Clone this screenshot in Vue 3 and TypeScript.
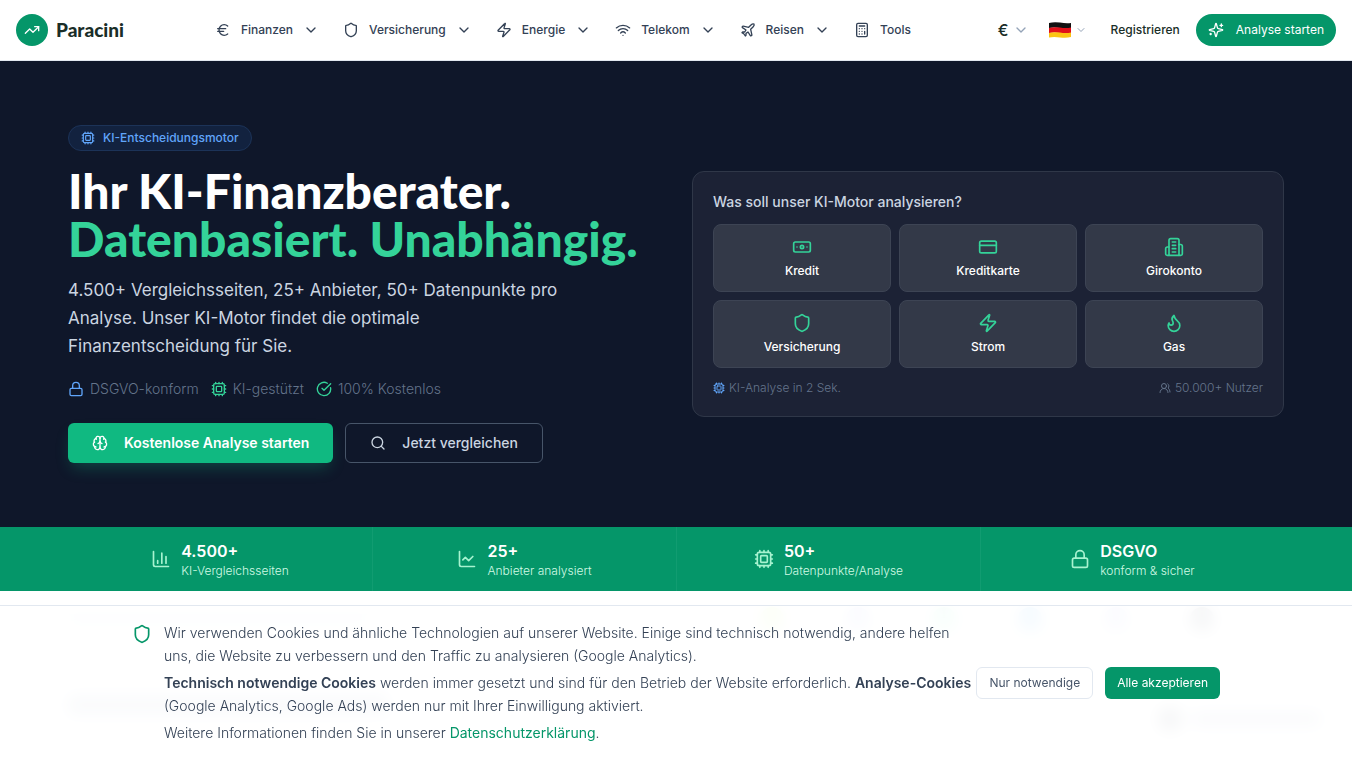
<script setup lang="ts">
import { h } from 'vue'

const shapes: Record<string, string> = {
  trend: '<path d="M22 7 13.5 15.5 8.5 10.5 2 17"/><path d="M16 7h6v6"/>',
  euro: '<path d="M4 10h12"/><path d="M4 14h9"/><path d="M19 6a7.7 7.7 0 0 0-5.2-2A7.9 7.9 0 0 0 6 12c0 4.4 3.5 8 7.8 8 2 0 3.8-.8 5.2-2"/>',
  shield: '<path d="M20 13c0 5-3.5 7.5-7.66 8.95a1 1 0 0 1-.67-.01C7.5 20.5 4 18 4 13V6a1 1 0 0 1 1-1c2 0 4.5-1.2 6.24-2.72a1.17 1.17 0 0 1 1.52 0C14.51 3.81 17 5 19 5a1 1 0 0 1 1 1z"/>',
  zap: '<path d="M4 14a1 1 0 0 1-.78-1.63l9.9-10.2a.5.5 0 0 1 .86.46l-1.92 6.02A1 1 0 0 0 13 10h7a1 1 0 0 1 .78 1.63l-9.9 10.2a.5.5 0 0 1-.86-.46l1.92-6.02A1 1 0 0 0 11 14z"/>',
  wifi: '<path d="M12 20h.01"/><path d="M2 8.82a15 15 0 0 1 20 0"/><path d="M5 12.859a10 10 0 0 1 14 0"/><path d="M8.5 16.429a5 5 0 0 1 7 0"/>',
  plane: '<path d="M17.8 19.2 16 11l3.5-3.5C21 6 21.5 4 21 3c-1-.5-3 0-4.5 1.5L13 8 4.8 6.2c-.5-.1-.9.1-1.1.5l-.3.5c-.2.5-.1 1 .3 1.3L9 12l-2 3H4l-1 1 3 2 2 3 1-1v-3l3-2 3.5 5.3c.3.4.8.5 1.3.3l.5-.2c.4-.3.6-.7.5-1.2z"/>',
  calculator: '<rect width="16" height="20" x="4" y="2" rx="2"/><path d="M8 6h8M16 14v4M16 10h.01M12 10h.01M8 10h.01M12 14h.01M8 14h.01M12 18h.01M8 18h.01"/>',
  sparkles: '<path d="M9.937 15.5A2 2 0 0 0 8.5 14.063l-6.135-1.582a.5.5 0 0 1 0-.962L8.5 9.936A2 2 0 0 0 9.937 8.5l1.582-6.135a.5.5 0 0 1 .963 0L14.063 8.5A2 2 0 0 0 15.5 9.937l6.135 1.581a.5.5 0 0 1 0 .964L15.5 14.063a2 2 0 0 0-1.437 1.437l-1.582 6.135a.5.5 0 0 1-.963 0z"/><path d="M20 3v4M22 5h-4M4 17v2M5 18H3"/>',
  cpu: '<rect width="16" height="16" x="4" y="4" rx="2"/><rect width="8" height="8" x="8" y="8" rx="1"/><path d="M12 20v2M12 2v2M17 20v2M17 2v2M2 12h2M2 17h2M2 7h2M20 12h2M20 17h2M20 7h2M7 20v2M7 2v2"/>',
  lock: '<rect width="18" height="11" x="3" y="11" rx="2"/><path d="M7 11V7a5 5 0 0 1 10 0v4"/>',
  check: '<path d="M21.801 10A10 10 0 1 1 17 3.335"/><path d="m9 11 3 3L22 4"/>',
  brain: '<path d="M12 18V5"/><path d="M15 13a4.17 4.17 0 0 1-3-4 4.17 4.17 0 0 1-3 4"/><path d="M17.598 6.5A3 3 0 1 0 12 5a3 3 0 1 0-5.598 1.5"/><path d="M17.997 5.125a4 4 0 0 1 2.526 5.77"/><path d="M18 18a4 4 0 0 0 2-7.464"/><path d="M19.967 17.483A4 4 0 1 1 12 18a4 4 0 1 1-7.967-.517"/><path d="M6 18a4 4 0 0 1-2-7.464"/><path d="M6.003 5.125a4 4 0 0 0-2.526 5.77"/>',
  search: '<circle cx="11" cy="11" r="8"/><path d="m21 21-4.3-4.3"/>',
  banknote: '<rect width="20" height="12" x="2" y="6" rx="2"/><circle cx="12" cy="12" r="2"/><path d="M6 12h.01M18 12h.01"/>',
  card: '<rect width="20" height="14" x="2" y="5" rx="2"/><path d="M2 10h20"/>',
  building: '<path d="M6 22V4a2 2 0 0 1 2-2h8a2 2 0 0 1 2 2v18Z"/><path d="M6 12H4a2 2 0 0 0-2 2v6a2 2 0 0 0 2 2h2"/><path d="M18 9h2a2 2 0 0 1 2 2v9a2 2 0 0 1-2 2h-2"/><path d="M10 6h4M10 10h4M10 14h4M10 18h4"/>',
  flame: '<path d="M8.5 14.5A2.5 2.5 0 0 0 11 12c0-1.38-.5-2-1-3-1.072-2.143-.224-4.054 2-6 .5 2.5 2 4.9 4 6.5 2 1.6 3 3.5 3 5.5a7 7 0 1 1-14 0c0-1.153.433-2.294 1-3a2.5 2.5 0 0 0 2.5 2.5z"/>',
  users: '<path d="M18 21a8 8 0 0 0-16 0"/><circle cx="10" cy="8" r="5"/><path d="M22 20c0-3.37-2-6.5-4-8a5 5 0 0 0-.45-8.3"/>',
  bars: '<path d="M3 3v16a2 2 0 0 0 2 2h16"/><path d="M18 17V9M13 17V5M8 17v-3"/>',
  line: '<path d="M3 3v16a2 2 0 0 0 2 2h16"/><path d="m19 9-5 5-4-4-3 3"/>',
  chevron: '<path d="m6 9 6 6 6-6"/>',
}

const Icon = (props: { name: string; size: number }) =>
  h('svg', {
    width: props.size,
    height: props.size,
    viewBox: '0 0 24 24',
    fill: 'none',
    stroke: 'currentColor',
    'stroke-width': 2,
    'stroke-linecap': 'round',
    'stroke-linejoin': 'round',
    'aria-hidden': 'true',
    innerHTML: shapes[props.name],
  })

const menus = [
  { icon: 'euro', label: 'Finanzen' },
  { icon: 'shield', label: 'Versicherung' },
  { icon: 'zap', label: 'Energie' },
  { icon: 'wifi', label: 'Telekom' },
  { icon: 'plane', label: 'Reisen' },
]

const topics = [
  { icon: 'banknote', label: 'Kredit' },
  { icon: 'card', label: 'Kreditkarte' },
  { icon: 'building', label: 'Girokonto' },
  { icon: 'shield', label: 'Versicherung' },
  { icon: 'zap', label: 'Strom' },
  { icon: 'flame', label: 'Gas' },
]

const stats = [
  { icon: 'bars', value: '4.500+', label: 'KI-Vergleichsseiten' },
  { icon: 'line', value: '25+', label: 'Anbieter analysiert' },
  { icon: 'cpu', value: '50+', label: 'Datenpunkte/Analyse' },
  { icon: 'lock', value: 'DSGVO', label: 'konform & sicher' },
]
</script>

<template>
  <div class="page">
    <header class="topbar">
      <a class="brand" href="#">
        <span class="brand-mark"><Icon name="trend" :size="16" /></span>
        <span class="brand-name">Paracini</span>
      </a>
      <nav class="nav" aria-label="Hauptnavigation">
        <button v-for="m in menus" :key="m.label" type="button" class="nav-item">
          <Icon :name="m.icon" :size="16" />
          <span>{{ m.label }}</span>
          <Icon name="chevron" :size="16" />
        </button>
        <a class="nav-item" href="#"><Icon name="calculator" :size="16" /><span>Tools</span></a>
      </nav>
      <div class="actions">
        <button type="button" class="picker currency" aria-label="Währung">
          <span>€</span><Icon name="chevron" :size="16" />
        </button>
        <button type="button" class="picker language" aria-label="Sprache">
          <svg class="flag" width="22" height="18" viewBox="0 0 22 18" aria-hidden="true">
            <path fill="#111" d="M0 2Q5 .6 11 1.600T22 2V7Q17 8 11 7T0 7Z" />
            <path fill="#e0101a" d="M0 7Q5 5.600 11 6.600T22 6.600V12Q17 13 11 12T0 12Z" />
            <path fill="#fbc414" d="M0 12Q5 10.600 11 11.600T22 11.600V16Q17 17.400 11 16.400T0 16.400Z" />
          </svg>
          <Icon name="chevron" :size="12" />
        </button>
        <a class="register" href="#">Registrieren</a>
        <a class="start" href="#"><Icon name="sparkles" :size="16" />Analyse starten</a>
      </div>
    </header>

    <main>
      <section class="hero">
        <div class="container hero-grid">
          <div class="intro">
            <span class="badge"><Icon name="cpu" :size="14" />KI-Entscheidungsmotor</span>
            <h1>Ihr KI-Finanzberater.<br /><span class="accent">Datenbasiert. Unabhängig.</span></h1>
            <p class="lead">
              4.500+ Vergleichsseiten, 25+ Anbieter, 50+ Datenpunkte pro<br />
              Analyse. Unser KI-Motor findet die optimale<br />
              Finanzentscheidung für Sie.
            </p>
            <ul class="trust">
              <li><Icon class="blue" name="lock" :size="16" />DSGVO-konform</li>
              <li><Icon class="green" name="cpu" :size="16" />KI-gestützt</li>
              <li><Icon class="green" name="check" :size="16" />100% Kostenlos</li>
            </ul>
            <div class="cta">
              <a class="btn primary" href="#"><Icon name="brain" :size="16" />Kostenlose Analyse starten</a>
              <a class="btn outline" href="#"><Icon name="search" :size="16" />Jetzt vergleichen</a>
            </div>
          </div>

          <div class="panel">
            <h2>Was soll unser KI-Motor analysieren?</h2>
            <div class="topics">
              <a v-for="t in topics" :key="t.label" class="topic" href="#">
                <Icon :name="t.icon" :size="20" /><span>{{ t.label }}</span>
              </a>
            </div>
            <div class="panel-foot">
              <span><Icon class="blue" name="cpu" :size="12" />KI-Analyse in 2 Sek.</span>
              <span><Icon name="users" :size="12" />50.000+ Nutzer</span>
            </div>
          </div>
        </div>
      </section>

      <section class="stats">
        <div class="container stats-grid">
          <div v-for="s in stats" :key="s.value" class="stat">
            <Icon :name="s.icon" :size="20" />
            <div>
              <strong>{{ s.value }}</strong>
              <span>{{ s.label }}</span>
            </div>
          </div>
        </div>
      </section>

      <section class="below" aria-hidden="true">
        <div class="container partners">
          <i class="bar wide"></i>
          <div class="dots">
            <i class="dot lime"></i><i class="dot violet"></i><i class="dot teal"></i>
            <i class="dot sky"></i><i class="dot violet"></i><i class="dot dark"></i>
          </div>
        </div>
        <div class="teaser">
          <i class="bar title"></i>
          <div class="more"><i class="dot dark"></i><i class="bar link"></i></div>
        </div>
      </section>
    </main>

    <aside class="cookies" aria-label="Cookie-Hinweis">
      <div class="cookies-inner">
        <Icon class="cookies-icon" name="shield" :size="20" />
        <div class="cookies-text">
          <p>
            Wir verwenden Cookies und ähnliche Technologien auf unserer Website. Einige sind technisch notwendig, andere helfen<br />
            uns, die Website zu verbessern und den Traffic zu analysieren (Google Analytics).
          </p>
          <p>
            <strong>Technisch notwendige Cookies</strong> werden immer gesetzt und sind für den Betrieb der Website erforderlich. <strong>Analyse-Cookies</strong><br />
            (Google Analytics, Google Ads) werden nur mit Ihrer Einwilligung aktiviert.
          </p>
          <p>Weitere Informationen finden Sie in unserer <a href="#">Datenschutzerklärung</a>.</p>
        </div>
        <div class="cookies-actions">
          <button type="button" class="small plain">Nur notwendige</button>
          <button type="button" class="small solid">Alle akzeptieren</button>
        </div>
      </div>
    </aside>
  </div>
</template>

<style>
body { overflow: hidden; }
</style>

<style scoped>
.page {
  min-height: 100vh;
  background: #fff;
  color: #334155;
  font-family: Inter, "Liberation Sans", sans-serif;
  font-size: 14px;
  line-height: 20px;
}
.page *, .page *::before { box-sizing: border-box; }
svg { flex: none; display: block; }
a { color: inherit; text-decoration: none; }
button { font: inherit; color: inherit; background: none; border: 0; padding: 0; cursor: pointer; }
h1, h2, p, ul { margin: 0; padding: 0; }
.container { max-width: 1280px; margin: 0 auto; padding: 0 32px; }

.topbar {
  display: flex;
  align-items: center;
  justify-content: space-between;
  height: 61px;
  padding: 0 16px;
  border-bottom: 1px solid #e2e8f0;
  white-space: nowrap;
}
.brand { display: flex; align-items: center; gap: 8px; margin-right: 4px; }
.brand-mark {
  display: grid;
  place-items: center;
  width: 32px;
  height: 32px;
  border-radius: 50%;
  background: #059669;
  color: #fff;
}
.brand-name { font-family: Lato, Inter, sans-serif; font-size: 19px; font-weight: 900; line-height: 28px; color: #1a2e28; }
.nav { display: flex; align-items: center; gap: 24px; }
.nav-item { display: flex; align-items: center; gap: 10px; font-size: 12px; font-weight: 500; }
.actions { display: flex; align-items: center; font-size: 12px; }
.picker { display: flex; align-items: center; gap: 4px; color: #1a2e28; }
.picker svg:last-child { color: #94a3b8; }
.currency { font-size: 16px; font-weight: 500; }
.language { margin-left: 20px; }
.register { margin-left: 24px; font-weight: 500; color: #1a2e28; }
.start {
  display: flex;
  align-items: center;
  gap: 12px;
  height: 32px;
  margin-left: 16px;
  padding: 0 12px;
  border-radius: 16px;
  background: #059669;
  color: #fff;
}

.hero { background: #0f172a; padding: 64px 0; }
.hero-grid { display: grid; grid-template-columns: 1fr 1fr; gap: 32px; align-items: center; }
.intro { display: flex; flex-direction: column; align-items: flex-start; min-width: 0; white-space: nowrap; }
.badge {
  display: flex;
  align-items: center;
  gap: 8px;
  height: 26px;
  padding: 0 12px;
  border: 1px solid #1c3358;
  border-radius: 13px;
  background: #12223f;
  color: #60a5fa;
  font-size: 12px;
  font-weight: 500;
}
h1 {
  margin-top: 16px;
  font-family: Lato, Inter, sans-serif;
  font-size: 48px;
  font-weight: 900;
  line-height: 48px;
  color: #fff;
}
.accent { color: #34d399; }
.lead { margin-top: 13px; font-size: 17px; line-height: 28px; color: #cbd5e1; }
.trust { display: flex; gap: 12px; margin-top: 19px; list-style: none; font-weight: 300; color: #64748b; }
.trust li { display: flex; align-items: center; gap: 6px; }
.blue { color: #60a5fa; }
.green { color: #34d399; }
.cta { display: flex; gap: 12px; margin-top: 24px; }
.btn { display: flex; align-items: center; gap: 16px; height: 40px; padding: 0 24px; border-radius: 6px; }
.primary { background: #10b981; color: #fff; font-weight: 600; box-shadow: 0 8px 16px -4px rgba(16, 185, 129, .3); }
.outline { border: 1px solid #475569; color: #cbd5e1; font-weight: 500; }

.panel {
  padding: 20px;
  border: 1px solid #2f3748;
  border-radius: 12px;
  background: #1c2235;
}
.panel h2 { font-size: 14px; font-weight: 500; line-height: 20px; color: #cbd5e1; }
.topics { display: grid; grid-template-columns: repeat(3, 1fr); gap: 8px; margin-top: 12px; }
.topic {
  display: flex;
  flex-direction: column;
  align-items: center;
  gap: 6px;
  padding: 12px;
  border: 1px solid #3d4454;
  border-radius: 8px;
  background: #333948;
  color: #fff;
  font-size: 12px;
  font-weight: 500;
  line-height: 16px;
}
.topic svg { color: #34d399; }
.panel-foot { display: flex; justify-content: space-between; margin-top: 12px; font-size: 12px; font-weight: 300; line-height: 16px; color: #64748b; }
.panel-foot span { display: flex; align-items: center; gap: 4px; }

.stats { background: #059669; color: #fff; }
.stats-grid { display: grid; grid-template-columns: repeat(4, 1fr); }
.stat { display: flex; align-items: center; justify-content: center; gap: 10px; padding: 12px 0; }
.stat + .stat { border-left: 1px solid #119c71; }
.stat svg { color: #a7f3d0; }
.stat strong { display: block; font-size: 16px; font-weight: 600; line-height: 24px; }
.stat span { display: block; font-size: 12px; font-weight: 300; line-height: 16px; color: #d1fae5; }

.below { padding-top: 16px; }
.below i { display: block; }
.partners { display: flex; justify-content: space-between; align-items: center; }
.dots { display: flex; gap: 62px; padding-right: 70px; }
.dot { width: 24px; height: 24px; border-radius: 50%; }
.lime { background: #bef264; }
.violet { background: #a5b4fc; }
.teal { background: #6ee7b7; }
.sky { background: #38a6f5; }
.dark { background: #475569; }
.bar { height: 10px; background: #cbd5e1; }
.wide { width: 300px; }
.teaser { display: flex; justify-content: space-between; margin: 64px 32px 0 68px; }
.title { width: 320px; height: 20px; background: #94a3b8; }
.more { display: flex; align-items: center; gap: 10px; margin-top: 12px; }
.link { width: 128px; height: 14px; background: #94a3b8; }

.cookies {
  position: fixed;
  right: 0;
  bottom: 0;
  left: 0;
  padding: 15px 0 16px;
  border-top: 1px solid #e2e8f0;
  background: rgba(255, 255, 255, .95);
  backdrop-filter: blur(8px);
}
.cookies-inner { display: flex; align-items: center; max-width: 1152px; margin: 0 auto; padding: 0 32px; }
.cookies-icon { align-self: flex-start; margin: 3px 12px 0 0; color: #059669; }
.cookies-text { flex: 1; display: grid; gap: 4px; min-width: 0; font-weight: 300; line-height: 23px; white-space: nowrap; }
.cookies-text strong { font-weight: 600; }
.cookies-text a { font-weight: 400; color: #059669; }
.cookies-actions { display: flex; gap: 12px; margin-left: 16px; }
.small { height: 32px; padding: 0 12px; border-radius: 6px; font-size: 12px; font-weight: 400; white-space: nowrap; }
.plain { border: 1px solid #e2e8f0; background: #fff; color: #475569; }
.solid { background: #059669; color: #fff; }
</style>
